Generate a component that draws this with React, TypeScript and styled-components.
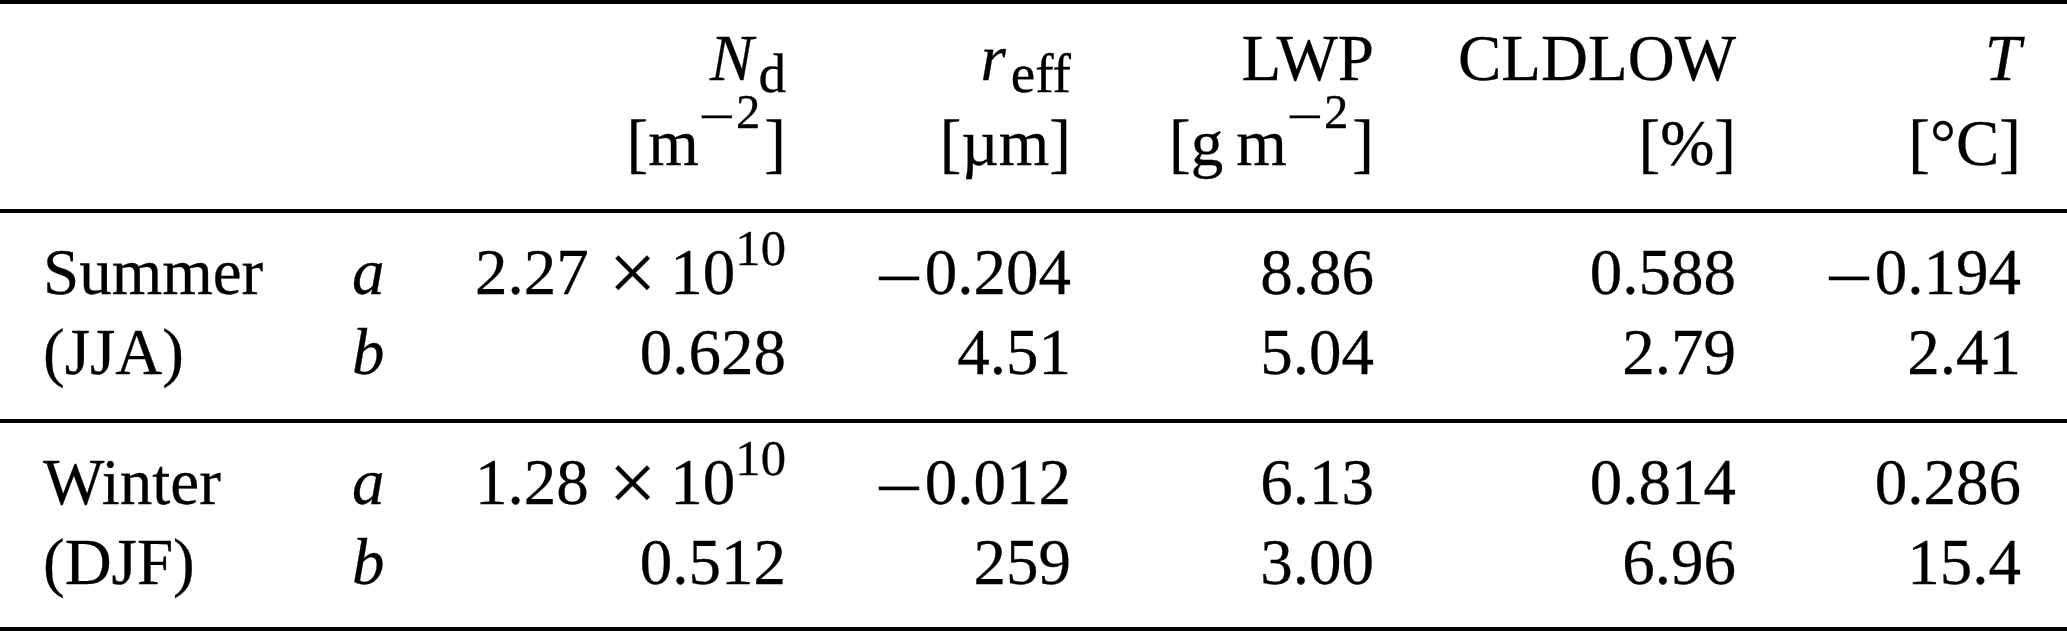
import styled, { createGlobalStyle } from 'styled-components';

const GlobalStyle = createGlobalStyle`
  html, body {
    margin: 0;
    padding: 0;
    background: #fff;
  }
  body {
    width: 2067px;
    height: 632px;
    overflow: hidden;
  }
`;

const Table = styled.table`
  width: 2067px;
  border-collapse: separate;
  border-spacing: 0;
  table-layout: fixed;
  font-family: 'Liberation Serif', 'Times New Roman', serif;
  font-size: 65px;
  color: #000;
  -webkit-text-stroke: 0.3px #000;
`;

const Col = styled.col<{ $w: number }>`
  width: ${(p) => p.$w}px;
`;

const Row = styled.tr<{ $top?: number; $bottom?: number; $ruleTop?: boolean; $ruleBottom?: boolean }>`
  & > td {
    padding-top: ${(p) => p.$top ?? 0}px;
    padding-bottom: ${(p) => p.$bottom ?? 0}px;
    border-top: ${(p) => (p.$ruleTop ? '4px solid #000' : 'none')};
    border-bottom: ${(p) => (p.$ruleBottom ? '4px solid #000' : 'none')};
  }
`;

const Cell = styled.td`
  padding-left: 40px;
  padding-right: 40px;
  line-height: 80px;
  text-align: right;
  white-space: nowrap;
  vertical-align: top;

  &:first-child {
    padding-left: 43px;
    text-align: left;
  }
  &:nth-child(2) {
    text-align: left;
  }
  &:last-child {
    padding-right: 46px;
  }
`;

const Ital = styled.i`
  font-style: italic;
`;

const Sub = styled.span`
  margin-left: 5px;
  font-size: 0.85em;
  line-height: 0;
  vertical-align: -12px;
`;

const Sup = styled.span<{ $raise: number; $size: number; $gap?: number }>`
  margin: 0 ${(p) => (p.$gap ? 4 : 0)}px 0 ${(p) => p.$gap ?? 0}px;
  font-size: ${(p) => p.$size}em;
  line-height: 0;
  vertical-align: ${(p) => p.$raise}px;
`;

const Minus = styled.span`
  display: inline-block;
  margin-right: 0.1em;
  transform: scaleX(1.2);
  transform-origin: right center;
`;

const Times = styled.span`
  margin: 0 14px 0 20px;
  font-size: 1.3em;
  line-height: 0;
  vertical-align: -7px;
`;

type Num = { sign?: boolean; value: string };

function Value({ sign, value }: Num) {
  return (
    <>
      {sign && <Minus>–</Minus>}
      {value}
    </>
  );
}

function Sci({ mantissa, exp }: { mantissa: string; exp: string }) {
  return (
    <>
      {mantissa}
      <Times>×</Times>10
      <Sup $raise={29} $size={0.78}>
        {exp}
      </Sup>
    </>
  );
}

function PerSquare() {
  return (
    <Sup $raise={37} $size={0.75} $gap={8}>
      <Minus>–</Minus>2
    </Sup>
  );
}

const seasons = [
  {
    name: 'Summer',
    code: '(JJA)',
    a: { nd: <Sci mantissa="2.27" exp="10" />, vals: [{ sign: true, value: '0.204' }, { value: '8.86' }, { value: '0.588' }, { sign: true, value: '0.194' }] },
    b: { nd: '0.628', vals: [{ value: '4.51' }, { value: '5.04' }, { value: '2.79' }, { value: '2.41' }] },
  },
  {
    name: 'Winter',
    code: '(DJF)',
    a: { nd: <Sci mantissa="1.28" exp="10" />, vals: [{ sign: true, value: '0.012' }, { value: '6.13' }, { value: '0.814' }, { value: '0.286' }] },
    b: { nd: '0.512', vals: [{ value: '259' }, { value: '3.00' }, { value: '6.96' }, { value: '15.4' }] },
  },
];

export default function App() {
  return (
    <>
      <GlobalStyle />
      <Table>
        <colgroup>
          <Col $w={312} />
          <Col $w={108} />
          <Col $w={406} />
          <Col $w={285} />
          <Col $w={303} />
          <Col $w={362} />
          <Col $w={291} />
        </colgroup>
        <thead>
          <Row $top={14} $ruleTop>
            <Cell />
            <Cell />
            <Cell>
              <Ital>N</Ital>
              <Sub>d</Sub>
            </Cell>
            <Cell>
              <Ital>r</Ital>
              <Sub>eff</Sub>
            </Cell>
            <Cell>LWP</Cell>
            <Cell>CLDLOW</Cell>
            <Cell>
              <Ital>T</Ital>
            </Cell>
          </Row>
          <Row $top={5} $bottom={26} $ruleBottom>
            <Cell />
            <Cell />
            <Cell>
              [m<PerSquare />]
            </Cell>
            <Cell>[µm]</Cell>
            <Cell>
              [g{'\u2009'}m<PerSquare />]
            </Cell>
            <Cell>[%]</Cell>
            <Cell>[°C]</Cell>
          </Row>
        </thead>
        {seasons.map((s, i) => (
          <tbody key={s.name}>
            <Row $top={19}>
              <Cell>{s.name}</Cell>
              <Cell>
                <Ital>a</Ital>
              </Cell>
              <Cell>{s.a.nd}</Cell>
              {s.a.vals.map((v, j) => (
                <Cell key={j}>
                  <Value {...v} />
                </Cell>
              ))}
            </Row>
            <Row $bottom={i === 0 ? 27 : 25} $ruleBottom>
              <Cell>{s.code}</Cell>
              <Cell>
                <Ital>b</Ital>
              </Cell>
              <Cell>{s.b.nd}</Cell>
              {s.b.vals.map((v, j) => (
                <Cell key={j}>
                  <Value {...v} />
                </Cell>
              ))}
            </Row>
          </tbody>
        ))}
      </Table>
    </>
  );
}
